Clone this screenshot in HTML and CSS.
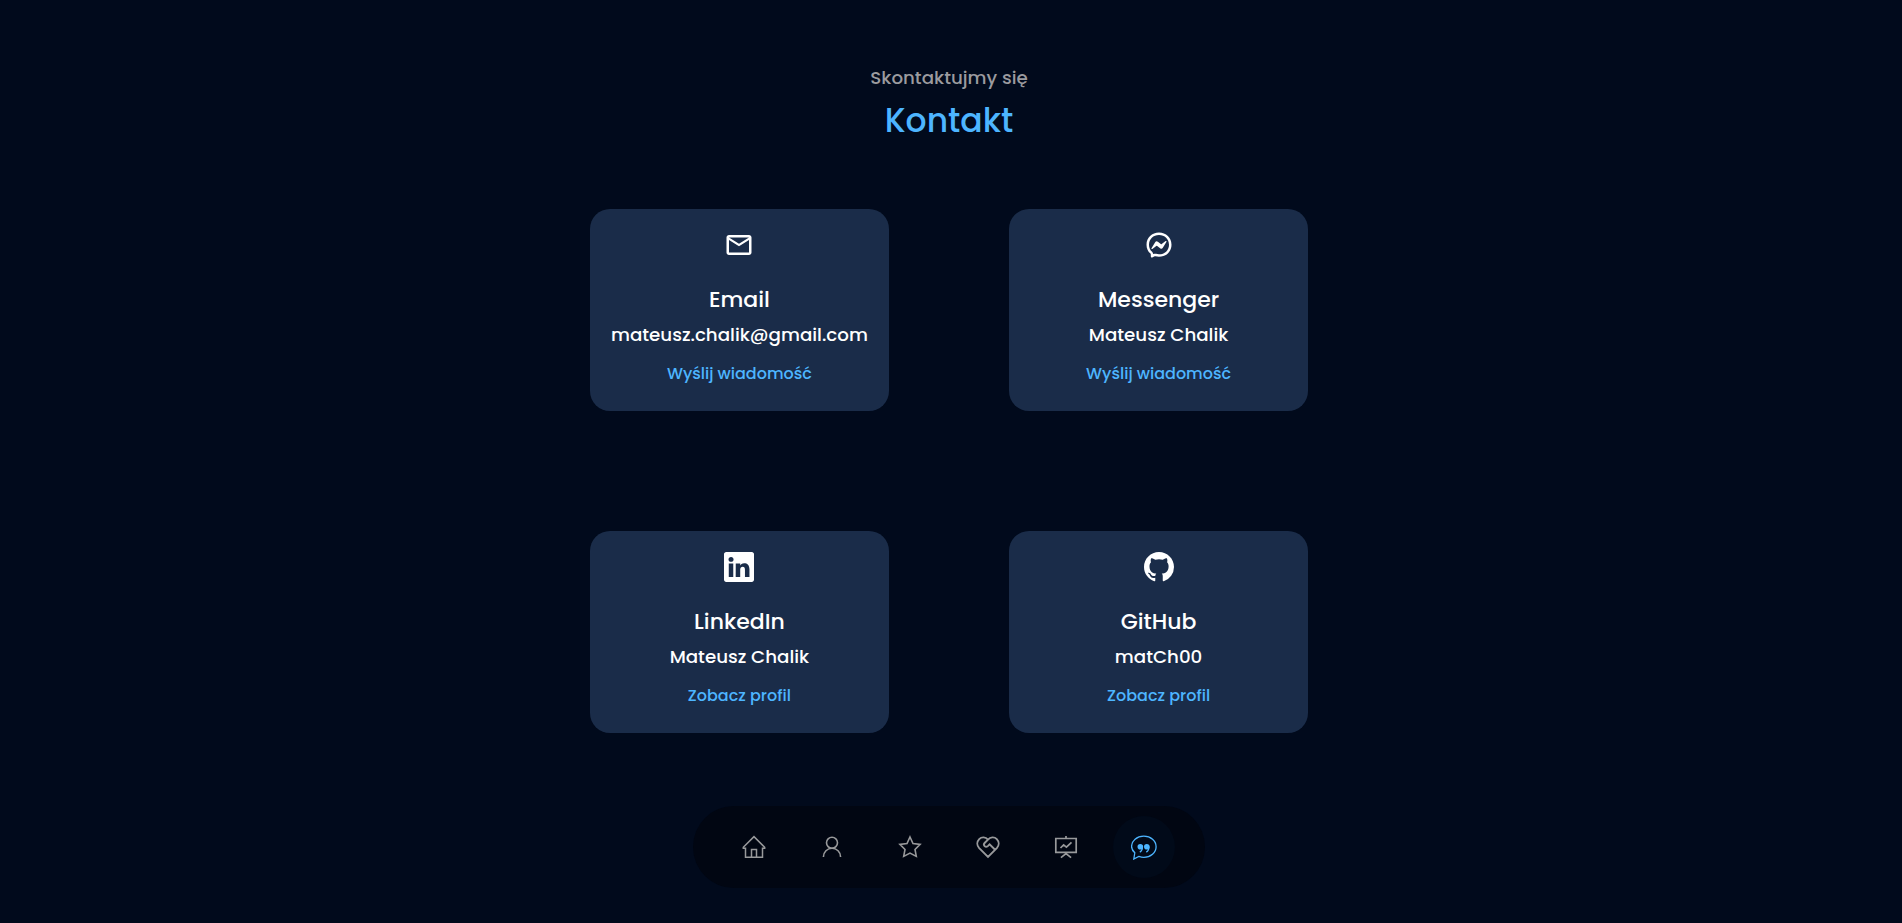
FILE: index.html
```html
<!DOCTYPE html>
<html lang="pl">
<head>
<meta charset="utf-8">
<title>Kontakt</title>
<link rel="stylesheet" href="styles.css">
</head>
<body>
<section class="contact">
  <h5 class="subtitle">Skontaktujmy się</h5>
  <h2 class="title">Kontakt</h2>
  <div class="cards">
    <article class="card">
      <svg class="card-icon" viewBox="0 0 24 24"><path d="M22 6c0-1.100-.9-2-2-2H4c-1.100 0-2 .9-2 2v12c0 1.100.9 2 2 2h16c1.100 0 2-.9 2-2V6zm-2 0l-8 4.990L4 6h16zm0 12H4V8l8 5 8-5v10z"/></svg>
      <h4 class="name">Email</h4>
      <h5 class="value">mateusz.chalik@gmail.com</h5>
      <a class="link">Wyślij wiadomość</a>
    </article>
    <article class="card">
      <svg class="card-icon" viewBox="0 0 24 24"><path fill-rule="evenodd" d="M7.764 19.225c.59-.26 1.250-.309 1.868-.139.770.210 1.565.316 2.368.314 4.585 0 8-3.287 8-7.700S16.585 4 12 4s-8 3.287-8 7.700c0 2.270.896 4.272 2.466 5.676.468.419.752 1.020.794 1.647l.504.202zM12 2c5.634 0 10 4.127 10 9.700s-4.366 9.700-10 9.700a10.894 10.894 0 0 1-2.895-.384.800.800 0 0 0-.534.039l-1.984.876a.8.8 0 0 1-1.123-.707l-.055-1.780a.797.797 0 0 0-.268-.570C3.195 17.135 2 14.615 2 11.700 2 6.127 6.367 2 12 2zM5.995 14.537l2.937-4.660a1.500 1.500 0 0 1 2.170-.400l2.336 1.750a.600.600 0 0 0 .723 0l3.155-2.396c.421-.320.971.184.689.631l-2.937 4.660a1.500 1.500 0 0 1-2.170.400l-2.336-1.750a.6.6 0 0 0-.723 0l-3.155 2.395c-.421.320-.971-.184-.689-.630z"/></svg>
      <h4 class="name">Messenger</h4>
      <h5 class="value">Mateusz Chalik</h5>
      <a class="link">Wyślij wiadomość</a>
    </article>
    <article class="card">
      <svg class="card-icon" viewBox="0 0 16 16"><path d="M0 1.146C0 .513.526 0 1.175 0h13.650C15.474 0 16 .513 16 1.146v13.708c0 .633-.526 1.146-1.175 1.146H1.175C.526 16 0 15.487 0 14.854V1.146zm4.943 12.248V6.169H2.542v7.225h2.401zm-1.200-8.212c.837 0 1.358-.554 1.358-1.248-.015-.709-.520-1.248-1.342-1.248-.822 0-1.359.540-1.359 1.248 0 .694.521 1.248 1.327 1.248h.016zm4.908 8.212V9.359c0-.216.016-.432.080-.586.173-.431.568-.878 1.232-.878.869 0 1.216.662 1.216 1.634v3.865h2.401V9.250c0-2.220-1.184-3.252-2.764-3.252-1.274 0-1.845.700-2.165 1.193v.025h-.016l.016-.025V6.169h-2.400c.030.678 0 7.225 0 7.225h2.400z"/></svg>
      <h4 class="name">LinkedIn</h4>
      <h5 class="value">Mateusz Chalik</h5>
      <a class="link">Zobacz profil</a>
    </article>
    <article class="card">
      <svg class="card-icon" viewBox="0 0 16 16"><path d="M8 0C3.580 0 0 3.580 0 8c0 3.540 2.290 6.530 5.470 7.590.4.070.55-.17.55-.38 0-.19-.01-.82-.01-1.490-2.010.37-2.530-.49-2.690-.94-.09-.23-.48-.94-.82-1.130-.28-.15-.68-.52-.01-.53.630-.01 1.080.58 1.230.82.720 1.210 1.870.87 2.330.66.070-.52.280-.87.510-1.070-1.780-.2-3.640-.89-3.640-3.950 0-.87.310-1.590.82-2.150-.08-.2-.36-1.020.08-2.120 0 0 .67-.21 2.200.82.640-.18 1.320-.27 2-.27.680 0 1.360.090 2 .27 1.530-1.040 2.200-.82 2.200-.82.440 1.100.160 1.920.080 2.120.510.560.820 1.270.820 2.150 0 3.070-1.870 3.750-3.650 3.950.290.250.540.730.540 1.480 0 1.070-.01 1.930-.01 2.200 0 .210.150.460.550.380A8.012 8.012 0 0 0 16 8c0-4.420-3.580-8-8-8z"/></svg>
      <h4 class="name">GitHub</h4>
      <h5 class="value">matCh00</h5>
      <a class="link">Zobacz profil</a>
    </article>
  </div>
</section>
<nav class="nav">
  <a class="nav-item"><svg viewBox="0 0 24 24" fill="none" stroke="currentColor" stroke-width="1.500"><path d="M12 1.600L1.300 12.300v.9H3.500V22.300h17V13.200h2.200v-.9z"/><path d="M9.500 22.300V14.600h5v7.700"/></svg></a>
  <a class="nav-item"><svg viewBox="0 0 24 24" fill="none" stroke="currentColor" stroke-width="1.600"><circle cx="12" cy="7.800" r="5.500"/><path d="M3.400 21.900c0-5 3.900-8.600 8.600-8.600s8.600 3.600 8.600 8.600"/></svg></a>
  <a class="nav-item"><svg viewBox="0 0 24 24" fill="none" stroke="currentColor" stroke-width="1.600"><path d="M12 2l3 6.500 7.100.9-5.100 5 1.300 7-6.300-3.300-6.300 3.300 1.300-7-5.100-5L9 8.500z"/></svg></a>
  <a class="nav-item"><svg viewBox="0 0 24 24" fill="none" stroke="currentColor" stroke-width="1.900"><path d="M12 4.600C9.600 1.900 5.700 1.600 3.200 4.100c-2.500 2.600-2.500 6.300 0 9L12 21.900l8.800-8.800c2.500-2.700 2.500-6.400 0-9C18.300 1.600 14.400 1.900 12 4.600L8.600 8c-.9 1-.9 2.200 0 3.100s2.200.9 3.200 0L13.600 9.400l5.500 5.300"/></svg></a>
  <a class="nav-item"><svg viewBox="0 0 24 24" fill="none" stroke="currentColor" stroke-width="1.700"><path d="M12 1v2.500M1.800 3.500h20.400v13.800H1.800zM12 17.300v1.800M6.900 22.600l5.100-4 5.100 4M6.500 13l3.100-3.100 2.800 2.300L17.500 7.300"/></svg></a>
  <a class="nav-item active"><svg viewBox="0 0 26 26" fill="none" stroke="currentColor" stroke-width="1.300"><path d="M2.800 25l1-6.200C1.800 17 .6 14.900.6 12.600.6 6.800 5.800 2.200 12.800 2.200s12.300 4.600 12.300 10.500-5.500 10.600-12.300 10.600c-1.800 0-3.500-.4-5-.9z"/><path d="M11.500 12.500c0 3-.9 4.600-2.700 5.600M18 12.500c0 3-.9 4.600-2.700 5.600"/><g fill="currentColor" stroke="none"><circle cx="9.300" cy="12.700" r="2.800"/><circle cx="15.800" cy="12.700" r="2.800"/></g></svg></a>
</nav>
</body>
</html>
```
FILE: styles.css
```css
* { box-sizing: border-box; margin: 0; padding: 0; }
body {
  min-height: 923px;
  background: #010a1c;
  color: #fff;
  font-family: Poppins, Lato, "Open Sans", sans-serif;
  display: flex;
  flex-direction: column;
  align-items: center;
  padding: 62px 4px 0 0;
}
h2, h4, h5, a { font-weight: 500; white-space: nowrap; }
.contact { text-align: center; }
.subtitle { font-size: 18.25px; line-height: 31px; color: #9b9b9f; }
.title { font-size: 33px; line-height: 56px; color: #4db5ff; }
.cards {
  display: grid;
  grid-template-columns: 299.2px 299.2px;
  gap: 120px;
  margin-top: 60px;
}
.card {
  height: 202px;
  padding-top: 21px;
  border-radius: 20px;
  background: #1a2c49;
  display: flex;
  flex-direction: column;
  align-items: center;
}
.card-icon { width: 30px; height: 30px; fill: #fff; }
.name { margin-top: 21px; font-size: 22px; line-height: 38px; }
.value { font-size: 18.25px; line-height: 32px; }
.link { margin-top: 9px; font-size: 16px; line-height: 27px; color: #4db5ff; }
.nav {
  display: flex;
  gap: 16px;
  margin-top: 73px;
  padding: 10px 30px;
  border-radius: 41px;
  background: #010612;
}
.nav-item {
  width: 62px;
  height: 62px;
  display: flex;
  align-items: center;
  justify-content: center;
  border-radius: 50%;
  color: #98999b;
}
.nav-item svg { width: 24px; height: 24px; }
.nav-item.active { background: #010a19; color: #4db5ff; }
.nav-item.active svg { width: 26px; height: 26px; }
```
